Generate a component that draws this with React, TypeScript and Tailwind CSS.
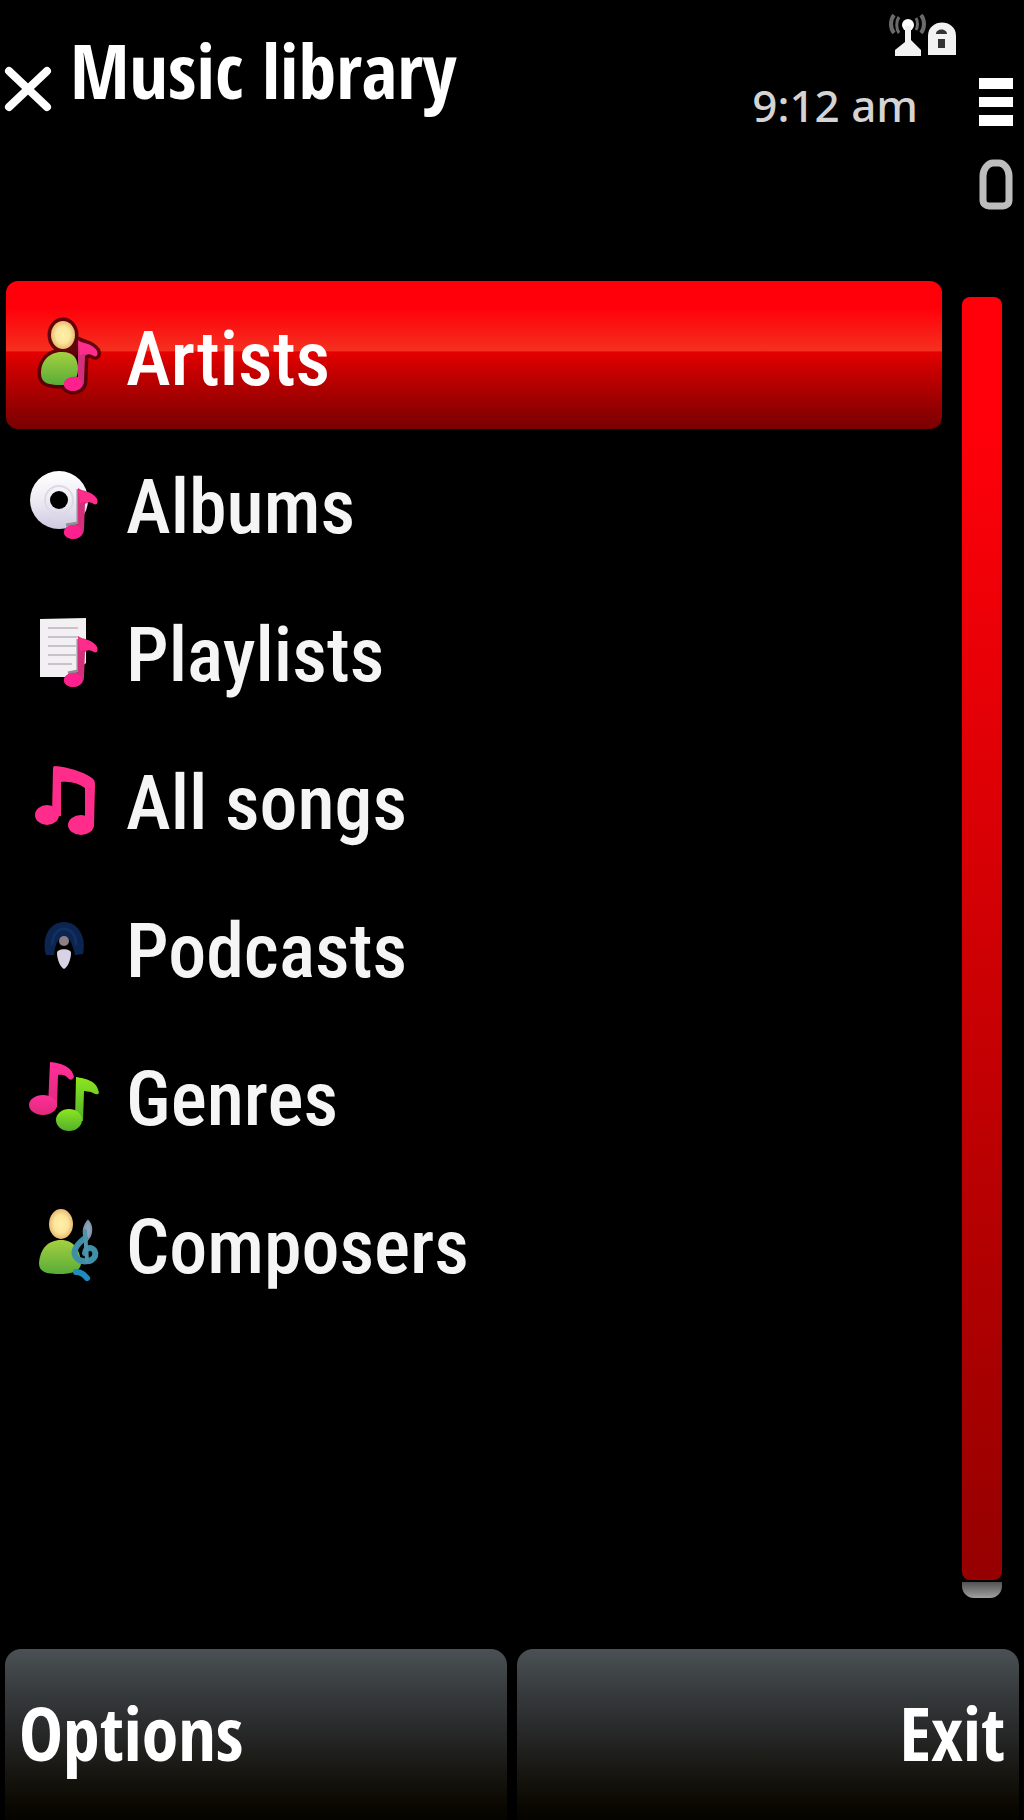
import { useState } from 'react';
import type { ReactNode } from 'react';

const PinkNote = () => (
  <g>
    <path
      d="M52 25 C57 29 65 27 71 36 C72 40 71 42 68 41 C65 38 62 39 59 41 L58 66 C58 73 52 76 46 76 C41 75 37 72 38 68 C40 63 46 61 52 62 Z"
      fill="#d3307c"
    />
    <path d="M52 26 C57 30 66 28 71 36 C72 40 71 42 68 41 C63 38 58 39 54 40 Z" fill="#ff2c8c" />
    <ellipse cx="47" cy="69" rx="9" ry="7" fill="#ff2090" />
  </g>
);

const ArtistsIcon = () => (
  <>
    <g stroke="#4a0008" strokeWidth="7" strokeLinejoin="round" opacity="0.85">
      <ellipse cx="37" cy="20" rx="12" ry="14" />
      <path d="M15 58 C15 44 25 37 36 37 C48 37 52 44 52 54 C52 66 44 71 30 70 C20 69 15 67 15 58 Z" />
      <path d="M52 25 C57 29 65 27 71 36 C72 40 71 42 68 41 C65 38 62 39 59 41 L58 66 C58 73 52 76 46 76 C41 75 37 72 38 68 Z" />
    </g>
    <path d="M15 58 C15 44 25 37 36 37 C48 37 52 44 52 54 C52 66 44 71 30 70 C20 69 15 67 15 58 Z" fill="url(#shirt)" />
    <ellipse cx="37" cy="20" rx="12" ry="14" fill="url(#skin)" />
    <PinkNote />
  </>
);

const AlbumsIcon = () => (
  <>
    <circle cx="33" cy="37" r="29" fill="url(#disc)" />
    <circle cx="33" cy="37" r="14" fill="none" stroke="#ded9e6" strokeWidth="2" />
    <circle cx="33" cy="37" r="9" fill="#000" />
    <path d="M52 26 L52 60 L40 62" fill="none" stroke="#8f8f98" strokeWidth="3" />
    <PinkNote />
  </>
);

const PlaylistsIcon = () => (
  <>
    <path d="M14 8 L60 7 L60 52 L44 66 L14 66 Z" fill="#f3f0f3" />
    <path d="M22 17 H52 M22 26 H52 M22 35 H50 M22 44 H50 M22 53 H46" stroke="#c8c3ca" strokeWidth="2" />
    <path d="M52 28 L52 60 L42 62" fill="none" stroke="#8f8f98" strokeWidth="3" />
    <PinkNote />
  </>
);

const SongsIcon = () => (
  <g fill="#ff2c8c">
    <path d="M29 7 C41 8 56 12 66 19 Q69 21 69 25 L68 67 L59 67 L59 29 C52 24 44 22 35 23 L35 57 L26 57 L27 9 Q27 7 29 7 Z" />
    <ellipse cx="21" cy="56" rx="12" ry="10" />
    <ellipse cx="55" cy="66" rx="13" ry="10" />
  </g>
);

const PodcastsIcon = () => (
  <>
    <path d="M20 48 C15 30 24 15 38 15 C52 15 61 30 57 47 L49 48 C46 36 44 30 38 30 C32 30 29 38 28 48 Z" fill="#0b2450" />
    <path d="M26 38 C27 27 32 22 38 22 C45 22 50 28 50 38" fill="none" stroke="#12305f" strokeWidth="3" />
    <circle cx="38" cy="34" r="5" fill="#8d7f86" />
    <path d="M31 46 C31 41 45 41 45 46 C45 52 42 60 38 62 C34 60 31 52 31 46 Z" fill="#d8d2e4" />
  </>
);

const GenresIcon = () => (
  <>
    <g fill="url(#pink)">
      <path d="M24 7 C34 8 46 11 48 22 Q46 26 43 24 C40 20 36 19 32 20 L31 52 L22 52 Z" />
      <ellipse cx="17" cy="50" rx="14" ry="10" />
    </g>
    <g fill="url(#green)">
      <path d="M50 22 C60 24 71 25 73 38 C71 41 68 38 65 37 L58 36 L57 66 L49 66 Z" />
      <ellipse cx="43" cy="65" rx="13" ry="11" />
    </g>
  </>
);

const ComposersIcon = () => (
  <>
    <path d="M13 60 C14 46 22 37 35 37 C48 37 54 47 55 60 C55 68 46 71 34 71 C20 71 13 69 13 60 Z" fill="url(#shirt)" />
    <ellipse cx="35" cy="21" rx="12" ry="15" fill="url(#skin)" />
    <g fill="none" strokeLinecap="round">
      <path d="M62 18 C57 24 56 32 61 37 C67 31 66 22 62 18 Z" fill="#8fa3b8" stroke="#8296ac" strokeWidth="2" />
      <path d="M59 35 C50 42 46 48 50 54 C54 60 66 60 69 53 C71 44 60 42 59 50" stroke="#3f8fa8" strokeWidth="6" />
      <path d="M59 28 L61 58" stroke="#4f93ac" strokeWidth="4" />
      <path d="M50 69 C54 69 58 71 61 75" stroke="#1f8cc0" strokeWidth="6" />
    </g>
  </>
);

const items: { label: string; icon: ReactNode }[] = [
  { label: 'Artists', icon: <ArtistsIcon /> },
  { label: 'Albums', icon: <AlbumsIcon /> },
  { label: 'Playlists', icon: <PlaylistsIcon /> },
  { label: 'All songs', icon: <SongsIcon /> },
  { label: 'Podcasts', icon: <PodcastsIcon /> },
  { label: 'Genres', icon: <GenresIcon /> },
  { label: 'Composers', icon: <ComposersIcon /> },
];

// Gradients shared by the list icons
const IconDefs = () => (
  <svg className="absolute h-0 w-0" aria-hidden="true">
    <defs>
      <radialGradient id="skin">
        <stop offset="0" stopColor="#fff0a8" />
        <stop offset="0.6" stopColor="#fbe59a" />
        <stop offset="1" stopColor="#e8b870" />
      </radialGradient>
      <linearGradient id="shirt" x1="0" y1="0" x2="0" y2="1">
        <stop offset="0" stopColor="#a4d040" />
        <stop offset="1" stopColor="#58ac38" />
      </linearGradient>
      <linearGradient id="disc" x1="0" y1="0" x2="0" y2="1">
        <stop offset="0" stopColor="#ffffff" />
        <stop offset="0.5" stopColor="#efebf4" />
        <stop offset="1" stopColor="#cdc9e0" />
      </linearGradient>
      <linearGradient id="pink" x1="0" y1="0" x2="0" y2="1">
        <stop offset="0" stopColor="#ff2f98" />
        <stop offset="1" stopColor="#e02a7c" />
      </linearGradient>
      <linearGradient id="green" x1="0" y1="0" x2="0" y2="1">
        <stop offset="0" stopColor="#8ce61e" />
        <stop offset="1" stopColor="#52b02c" />
      </linearGradient>
    </defs>
  </svg>
);

const Header = () => (
  <header className="flex h-[281px] items-start justify-between pl-1 pr-2.5">
    <div className="flex items-start gap-4">
      <button aria-label="Close" className="mt-16">
        <svg className="h-[50px] w-[50px]" viewBox="0 0 50 50" stroke="#fff" strokeWidth="8" strokeLinecap="round">
          <path d="M5 7 L43 43 M43 7 L5 43" />
        </svg>
      </button>
      <h1 className="mt-[18px] font-['Open_Sans_Condensed','Open_Sans',sans-serif] text-[76px] leading-[104px] font-bold">
        Music library
      </h1>
    </div>

    <div className="flex items-start gap-[60px]">
      <div className="flex flex-col items-end pt-3">
        <svg className="-mr-10 h-[48px] w-[76px]" viewBox="0 0 76 48" aria-label="Signal, locked">
          <g fill="none" stroke="#6a6a6a" strokeWidth="4">
            <path d="M12 3 C8 8 8 16 12 21" />
            <path d="M17 5 C14 9 14 17 17 21" strokeWidth="3" />
            <path d="M39 3 C43 8 43 16 39 21" />
            <path d="M34 6 C36 9 36 15 34 18" strokeWidth="3" />
          </g>
          <circle cx="26" cy="13" r="6" fill="#fff" />
          <path d="M23 14 H29 V28 L39 38 V44 H13 V38 L23 30 Z" fill="#f2f2f2" />
          <path d="M46 43 V24 C46 6 74 6 74 24 V43 Z" fill="#f2f2f2" />
          <path d="M54 22 C54 16 65 16 65 22 Z M56 27 H63 V36 H56 Z" fill="#333" />
        </svg>
        <time className="mt-[15px] font-['Noto_Sans',sans-serif] text-[44px] leading-[60px] font-medium text-neutral-300">
          9:12 am
        </time>
      </div>
      <div className="flex flex-col gap-[31px] pt-[77px]">
        <svg className="h-[51px] w-[36px]" viewBox="0 0 36 51" fill="#fff" aria-label="Menu">
          <path d="M1 1 H35 V12 H1 Z M1 20 H35 V30 H1 Z M1 38 H35 V49 H1 Z" />
        </svg>
        <svg className="h-[53px] w-[36px]" viewBox="0 0 36 53" fill="none" stroke="#bdbdbd" strokeWidth="7" aria-label="Battery">
          <path d="M5 17 C5 10 10 4 15 4 H21 C26 4 31 10 31 17 V41 C31 45 28 47 25 47 H11 C8 47 5 45 5 41 Z" />
        </svg>
      </div>
    </div>
  </header>
);

const App = () => {
  const [selected, setSelected] = useState('Artists');

  return (
    <div className="flex min-h-screen flex-col bg-black text-white">
      <IconDefs />
      <Header />

      {/* List and scrollbar */}
      <main className="flex flex-1 gap-5 pr-[22px] pl-1.5">
        <ul className="flex-1 font-['Roboto_Condensed',Roboto,sans-serif] text-[76px] font-medium text-neutral-100">
          {items.map((item) => (
            <li key={item.label}>
              <button
                onClick={() => setSelected(item.label)}
                className={`flex h-[148px] w-full items-center gap-5 rounded-xl pl-5 text-left ${
                  item.label === selected
                    ? 'bg-[linear-gradient(180deg,#ff000a_0%,#ff000a_18%,#f5301f_47%,#e60000_48%,#c80000_60%,#780000_100%)] text-white'
                    : ''
                }`}
              >
                <svg className="h-20 w-20 shrink-0" viewBox="0 0 80 80" aria-hidden="true">
                  {item.icon}
                </svg>
                <span className="pt-2">{item.label}</span>
              </button>
            </li>
          ))}
        </ul>
        <div className="mt-4 mb-[51px] flex w-10 flex-col gap-0.5" aria-hidden="true">
          <div className="flex-1 rounded-lg bg-linear-to-b from-[#ff000a] from-10% to-[#960000]" />
          <div className="h-4 rounded-b-xl bg-linear-to-b from-neutral-600 to-neutral-400" />
        </div>
      </main>

      {/* Soft keys */}
      <footer className="grid grid-cols-2 gap-2.5 px-[5px] font-['Open_Sans_Condensed','Open_Sans',sans-serif] text-[74px] leading-[104px] font-bold text-shadow-[0_4px_4px_#000]">
        <button className="rounded-t-2xl bg-linear-to-b from-[#4a5054] via-[#262727] via-50% to-[#060400] px-3.5 pt-8 pb-[35px] text-left">
          Options
        </button>
        <button className="rounded-t-2xl bg-linear-to-b from-[#4a5054] via-[#262727] via-50% to-[#060400] px-3.5 pt-8 pb-[35px] text-right">
          Exit
        </button>
      </footer>
    </div>
  );
};

export default App;
